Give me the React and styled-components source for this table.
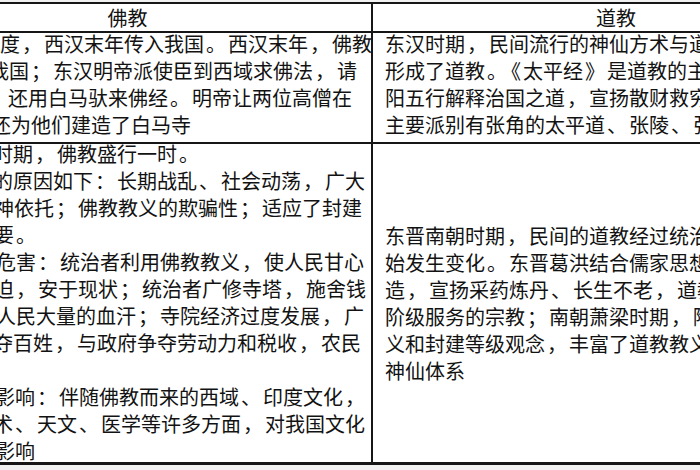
import React from "react";
import styled, { createGlobalStyle } from "styled-components";

const GlobalStyle = createGlobalStyle`
  html, body {
    margin: 0;
    padding: 0;
    background: #f1f1f1;
  }
  body {
    font-family: "Noto Sans CJK SC", "Noto Sans", sans-serif;
    color: #121212;
  }
`;

const Viewport = styled.div`
  width: 700px;
  height: 470px;
  padding-top: 2px;
  box-sizing: border-box;
  overflow: hidden;
  background: #f1f1f1;
`;

// the table is wider than the window, only a crop of it shows
const Table = styled.div`
  width: 975px;
  margin-left: -116px;
  background: #fff;
  border-top: 2px solid #161616;
  border-bottom: 3px solid #161616;
`;

const Row = styled.div`
  display: grid;
  grid-template-columns: 487px 488px;
  height: ${(p) => p.$height}px;
  box-sizing: border-box;
  border-bottom: ${(p) => (p.$last ? "none" : "2px solid #161616")};
`;

const Cell = styled.div`
  box-sizing: border-box;
  padding-left: ${(p) => p.$pad || 0}px;
  display: flex;
  flex-direction: column;
  justify-content: ${(p) => (p.$middle ? "center" : "flex-start")};
  overflow: hidden;
  & + & {
    border-left: 2px solid #161616;
  }
`;

const HeadCell = styled(Cell)`
  align-items: center;
  justify-content: center;
  font-size: 20px;
  line-height: 27px;
`;

const Lines = styled.div`
  margin-top: ${(p) => p.$lift || 0}px;
`;

const Line = styled.div`
  font-size: 20px;
  height: 27px;
  line-height: 27px;
  white-space: nowrap;
  margin-left: ${(p) => p.$shift || 0}px;
`;

const Punct = styled.span`
  margin: 0 2px;
`;

const renderText = (text) =>
  text.split(/([，。；：、《》])/).map((part, i) =>
    /^[，。；：、《》]$/.test(part) ? <Punct key={i}>{part}</Punct> : part
  );

const buddhismIntro = [
  { text: "度，西汉末年传入我国。西汉末年，佛教", shift: 0 },
  { text: "我国；东汉明帝派使臣到西域求佛法，请", shift: -11 },
  { text: "，还用白马驮来佛经。明帝让两位高僧在", shift: -16 },
  { text: "还为他们建造了白马寺", shift: -9 }
];

const buddhismLater = [
  { text: "时期，佛教盛行一时。", shift: -7 },
  { text: "的原因如下：长期战乱、社会动荡，广大", shift: -7 },
  { text: "神依托；佛教教义的欺骗性；适应了封建", shift: -6 },
  { text: "要。", shift: -6 },
  { text: "危害：统治者利用佛教教义，使人民甘心", shift: -4 },
  { text: "迫，安于现状；统治者广修寺塔，施舍钱", shift: -6 },
  { text: "人民大量的血汗；寺院经济过度发展，广", shift: -4 },
  { text: "夺百姓，与政府争夺劳动力和税收，农民", shift: -7 },
  { text: "", shift: 0 },
  { text: "影响：伴随佛教而来的西域、印度文化，", shift: -5 },
  { text: "术、天文、医学等许多方面，对我国文化", shift: -7 },
  { text: "影响", shift: -5 }
];

const taoismIntro = [
  "东汉时期，民间流行的神仙方术与道",
  "形成了道教。《太平经》是道教的主",
  "阳五行解释治国之道，宣扬散财救穷",
  "主要派别有张角的太平道、张陵、张"
];

const taoismLater = [
  "东晋南朝时期，民间的道教经过统治",
  "始发生变化。东晋葛洪结合儒家思想",
  "造，宣扬采药炼丹、长生不老，道教",
  "阶级服务的宗教；南朝萧梁时期，陶",
  "义和封建等级观念，丰富了道教教义",
  "神仙体系"
];

export default function App() {
  return (
    <>
      <GlobalStyle />
      <Viewport>
        <Table>
          <Row $height={29}>
            <HeadCell>佛教</HeadCell>
            <HeadCell>道教</HeadCell>
          </Row>
          <Row $height={111}>
            <Cell $pad={116}>
              <Lines $lift={-3}>
                {buddhismIntro.map((line, i) => (
                  <Line key={i} $shift={line.shift}>
                    {renderText(line.text)}
                  </Line>
                ))}
              </Lines>
            </Cell>
            <Cell $pad={12}>
              <Lines $lift={-3}>
                {taoismIntro.map((line, i) => (
                  <Line key={i}>{renderText(line)}</Line>
                ))}
              </Lines>
            </Cell>
          </Row>
          <Row $height={318} $last>
            <Cell $pad={116}>
              <Lines $lift={-4}>
                {buddhismLater.map((line, i) => (
                  <Line key={i} $shift={line.shift}>
                    {renderText(line.text)}
                  </Line>
                ))}
              </Lines>
            </Cell>
            <Cell $pad={12} $middle>
              <Lines>
                {taoismLater.map((line, i) => (
                  <Line key={i}>{renderText(line)}</Line>
                ))}
              </Lines>
            </Cell>
          </Row>
        </Table>
      </Viewport>
    </>
  );
}
